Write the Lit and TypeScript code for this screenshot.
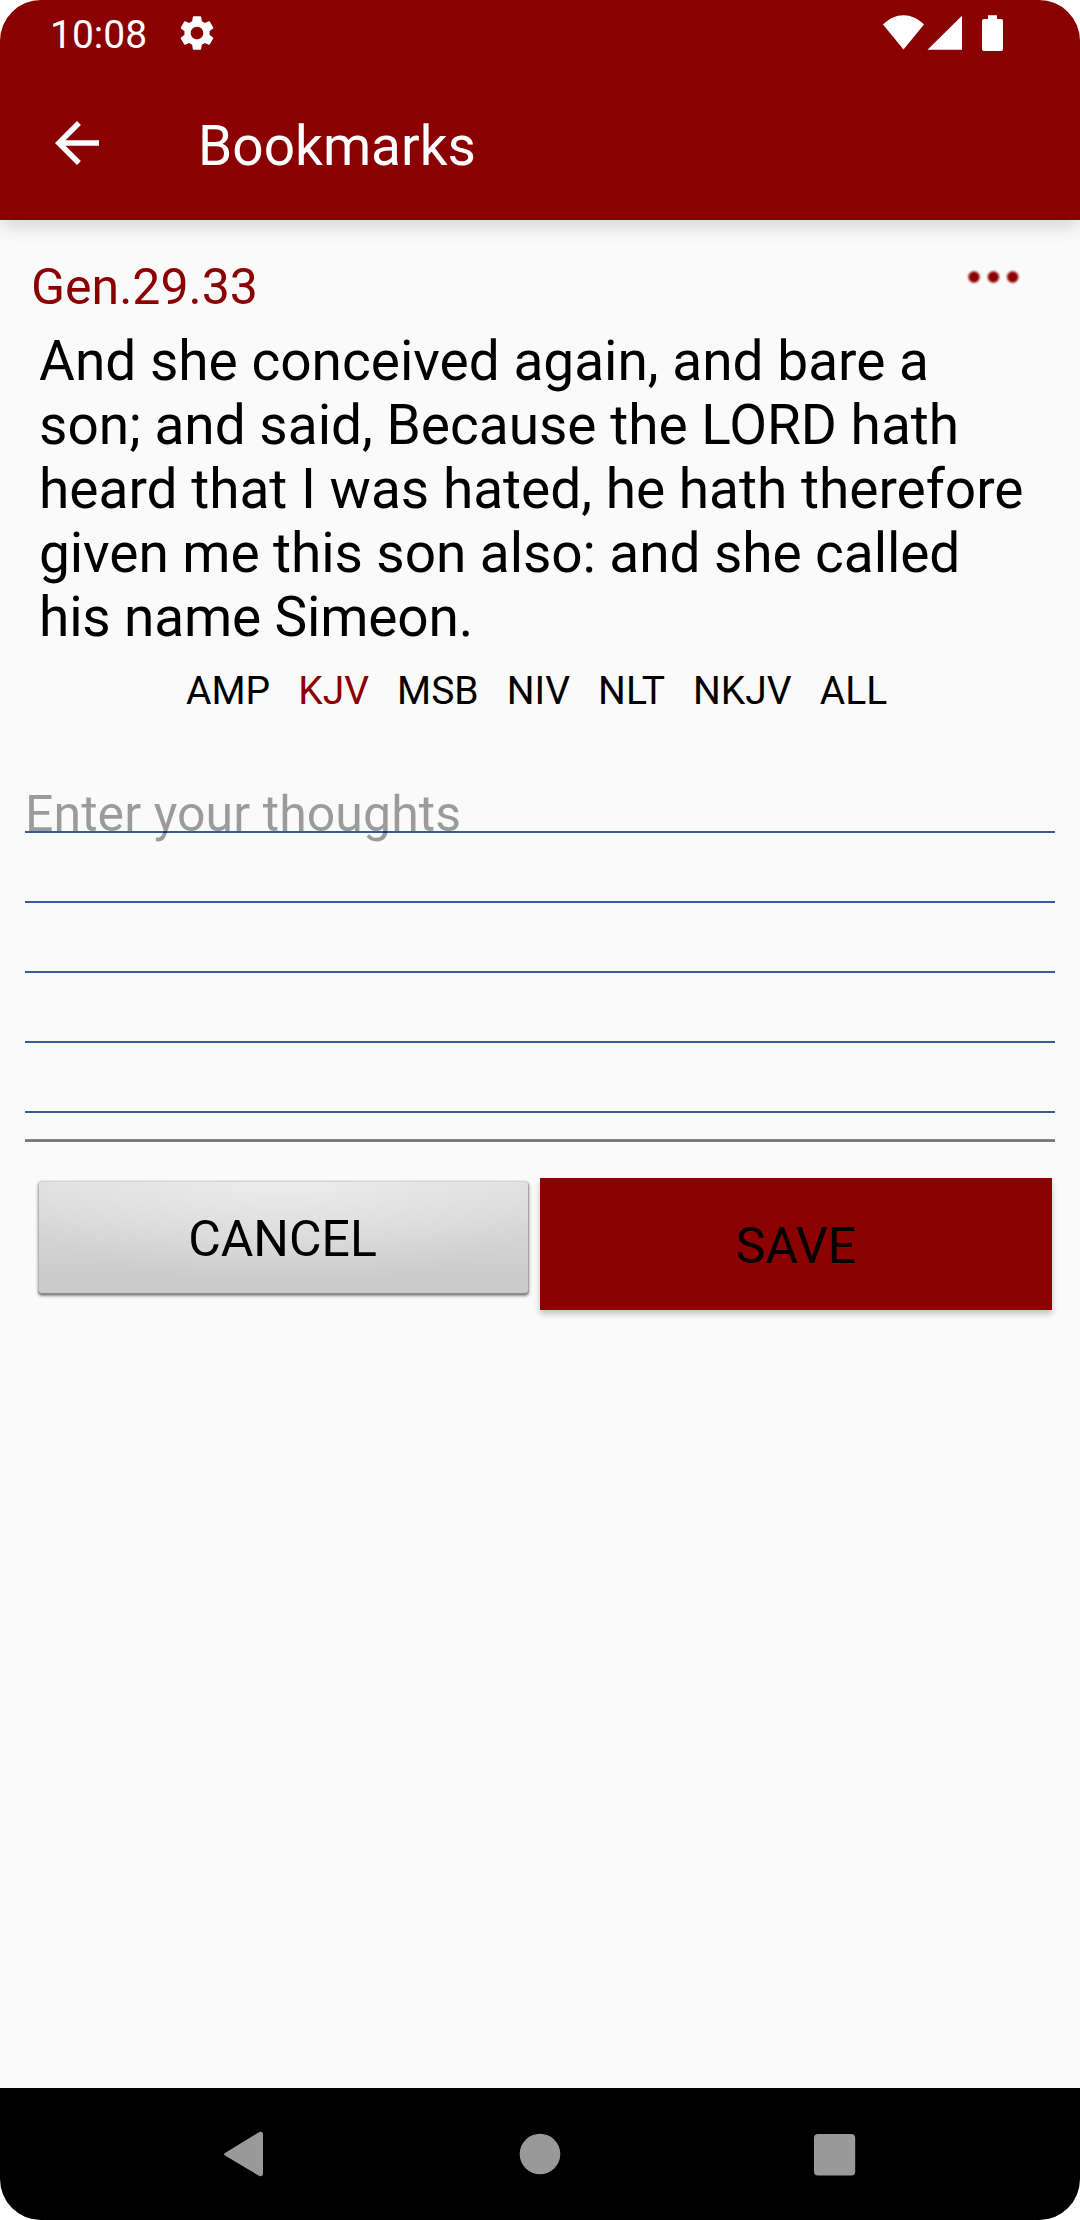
import { LitElement, html, css } from "lit";
import { customElement, property, state } from "lit/decorators.js";
import { styleMap } from "lit/directives/style-map.js";

@customElement("status-bar")
class StatusBar extends LitElement {
  static styles = css`
    :host { display: flex; height: 66px; padding: 0 77px 0 50px; box-sizing: border-box; align-items: flex-start; }
    .clock { font-size: 39px; line-height: 46px; margin-top: 12px; width: 125.5px; }
    .gear { width: 42px; height: 42px; margin-top: 12.4px; }
    .signals { margin-left: auto; width: 120px; height: 36px; margin-top: 15px; }
  `;
  render() {
    return html`
      <span class="clock">10:08</span>
      <svg class="gear" viewBox="0 0 24 24" fill="#fff"><path d="M19.14 12.94c.04-.3.06-.61.06-.94 0-.32-.02-.64-.07-.94l2.03-1.58c.18-.14.23-.41.12-.61l-1.92-3.32c-.12-.22-.37-.29-.59-.22l-2.39.96c-.5-.38-1.03-.7-1.62-.94l-.36-2.54c-.04-.24-.24-.41-.48-.41h-3.84c-.24 0-.43.17-.47.41l-.36 2.54c-.59.24-1.13.57-1.62.94l-2.39-.96c-.22-.08-.47 0-.59.22L2.74 8.87c-.12.21-.08.47.12.61l2.03 1.58c-.05.3-.09.63-.09.94s.02.64.07.94l-2.03 1.58c-.18.14-.23.41-.12.61l1.92 3.32c.12.22.37.29.59.22l2.39-.96c.5.38 1.03.7 1.62.94l.36 2.54c.05.24.24.41.48.41h3.84c.24 0 .44-.17.47-.41l.36-2.54c.59-.24 1.13-.56 1.62-.94l2.39.96c.22.08.47 0 .59-.22l1.92-3.32c.12-.22.07-.47-.12-.61l-2.01-1.58zM12 15.6c-1.98 0-3.6-1.62-3.6-3.6s1.62-3.6 3.6-3.6 3.6 1.62 3.6 3.6-1.62 3.6-3.6 3.6z"/></svg>
      <svg class="signals" viewBox="0 0 120 36" fill="#fff">
        <path d="M0 9.6C5.7 3.6 12.7.2 20.5.2S35.300 3.600 41 9.600L20.500 34.500Z"/>
        <path d="M44.500 34.800L79 .7V34.800Z"/>
        <path d="M105 .2H114V4H118Q120 4 120 6V34Q120 36 118 36H101Q99 36 99 34V6Q99 4 101 4H105Z"/>
      </svg>`;
  }
}

@customElement("title-bar")
class TitleBar extends LitElement {
  @property() heading = "";
  static styles = css`
    :host { display: flex; height: 154px; padding-left: 44px; box-sizing: border-box; align-items: flex-start; }
    .back { width: 66px; height: 66px; margin-top: 44px; margin-right: 88px; }
    .heading { margin: 48px 0 0; font-size: 55px; line-height: 64px; font-weight: 400; }
  `;
  render() {
    return html`
      <svg class="back" viewBox="0 0 24 24" fill="#fff"><path d="M20 11H7.830l5.590-5.590L12 4l-8 8 8 8 1.410-1.410L7.830 13H20v-2z"/></svg>
      <h1 class="heading">${this.heading}</h1>`;
  }
}

@customElement("bookmark-card")
class BookmarkCard extends LitElement {
  @state() private active = "KJV";
  private versions = ["AMP", "KJV", "MSB", "NIV", "NLT", "NKJV", "ALL"];
  private lines = [
    { text: "And she conceived again, and bare a", tracking: 0 },
    { text: "son; and said, Because the LORD hath", tracking: 0 },
    { text: "heard that I was hated, he hath therefore", tracking: 0 },
    { text: "given me this son also: and she called", tracking: -0.08 },
    { text: "his name Simeon.", tracking: -0.16 },
  ];
  static styles = css`
    :host { display: block; margin: 17px 17px 0; border-top: 3px solid #f7f7f7; }
    .top { display: flex; justify-content: space-between; padding: 18px 43px 0 14px; height: 58px; }
    .ref { color: #8b0000; font-size: 50px; line-height: 58px; }
    .more { width: 54px; height: 16px; margin-top: 11px; filter: blur(1px); }
    .verse { margin: 13px 0 0 22px; font-size: 55px; line-height: 64px; white-space: nowrap; color: #000; }
    .line { display: block; }
    .versions { display: flex; gap: 28.1px; margin: 20px 0 0 169px; font-size: 39px; line-height: 45px; color: #000; }
    .active { color: #8b0000; }
  `;
  render() {
    return html`
      <div class="top">
        <span class="ref">Gen.29.33</span>
        <svg class="more" viewBox="0 0 54 16" fill="#8b0000"><circle cx="8" cy="8" r="5.700"/><circle cx="27.400" cy="8" r="5.700"/><circle cx="46.700" cy="8" r="5.700"/></svg>
      </div>
      <div class="verse">
        ${this.lines.map((l) => html`<span class="line" style=${styleMap({ letterSpacing: `${l.tracking}px` })}>${l.text}</span>`)}
      </div>
      <div class="versions">
        ${this.versions.map((v) => html`<span class=${v === this.active ? "active" : "version"} @click=${() => (this.active = v)}>${v}</span>`)}
      </div>`;
  }
}

@customElement("note-editor")
class NoteEditor extends LitElement {
  static styles = css`
    :host { display: block; margin: 49px 25px 0; }
    .paper {
      height: 376px; box-sizing: border-box; padding-top: 22px;
      background: repeating-linear-gradient(#fafafa 0 68px, #3a5a9b 68px 70px) top / 100% 350px no-repeat;
      font-size: 50px; line-height: 58px; letter-spacing: 0.07px; color: rgba(0, 0, 0, 0.38);
    }
    .rule { height: 3px; background: linear-gradient(#888 0 1px, #757575 1px 2px, #7c7c7c 2px 3px); }
  `;
  render() {
    return html`<div class="paper">Enter your thoughts</div><div class="rule"></div>`;
  }
}

@customElement("action-row")
class ActionRow extends LitElement {
  static styles = css`
    :host { display: flex; align-items: flex-start; margin-top: 36px; padding-left: 38px; }
    button { font: inherit; font-size: 50px; line-height: 58px; color: #000; border: 0; padding: 0; box-sizing: border-box; text-align: center; }
    .cancel {
      width: 491px; height: 114px; margin: 3px 11px 0 0; padding: 1px 2px 0 0; border-radius: 4px;
      background: radial-gradient(ellipse 60% 90% at 50% 0%, rgba(255, 255, 255, 0.4), rgba(255, 255, 255, 0)), linear-gradient(#e0e0e0, #cbcbcb 85%);
      box-shadow: inset 0 1px 0 #d2d2d2, inset 0 -2px 1px #888, inset -1px 0 0 #aaa, inset 1px 0 0 #bbb, 0 1px 3px rgba(0, 0, 0, 0.45);
    }
    .save { width: 512px; height: 132px; padding-top: 4px; background: #8b0000; box-shadow: 0 4px 6px rgba(0, 0, 0, 0.22); }
  `;
  render() {
    return html`<button class="cancel">CANCEL</button><button class="save">SAVE</button>`;
  }
}

@customElement("nav-bar")
class NavBar extends LitElement {
  static styles = css`
    :host { display: flex; justify-content: center; gap: 246px; height: 132px; background: #000; align-items: center; }
    .key { width: 48px; height: 48px; }
  `;
  render() {
    return html`
      <svg class="key" viewBox="0 0 48 48" fill="#999"><path d="M3.400 22.800L36.500 2.400Q41 .2 41 4.500V43Q41 47.600 36.500 45.600L3.400 25.800Q.6 24.300 3.400 22.800Z"/></svg>
      <svg class="key" viewBox="0 0 48 48" fill="#999"><circle cx="24" cy="24" r="20.300"/></svg>
      <svg class="key" viewBox="0 0 48 48" fill="#999"><rect x="4" y="4" width="41.200" height="41.500" rx="4"/></svg>`;
  }
}

@customElement("app-root")
class AppRoot extends LitElement {
  static styles = css`
    :host { display: block; background: #fff; font-family: Roboto, "Liberation Sans", sans-serif; }
    .screen { display: flex; flex-direction: column; width: 1080px; height: 2220px; border-radius: 41px; overflow: hidden; background: #fafafa; }
    .header { background: #8b0000; color: #fff; height: 220px; box-shadow: 0 4px 20px rgba(0, 0, 0, 0.18); }
    .content { flex: 1; }
  `;
  render() {
    return html`
      <div class="screen">
        <header class="header"><status-bar></status-bar><title-bar heading="Bookmarks"></title-bar></header>
        <main class="content">
          <bookmark-card></bookmark-card>
          <note-editor></note-editor>
          <action-row></action-row>
        </main>
        <nav-bar></nav-bar>
      </div>`;
  }
}
